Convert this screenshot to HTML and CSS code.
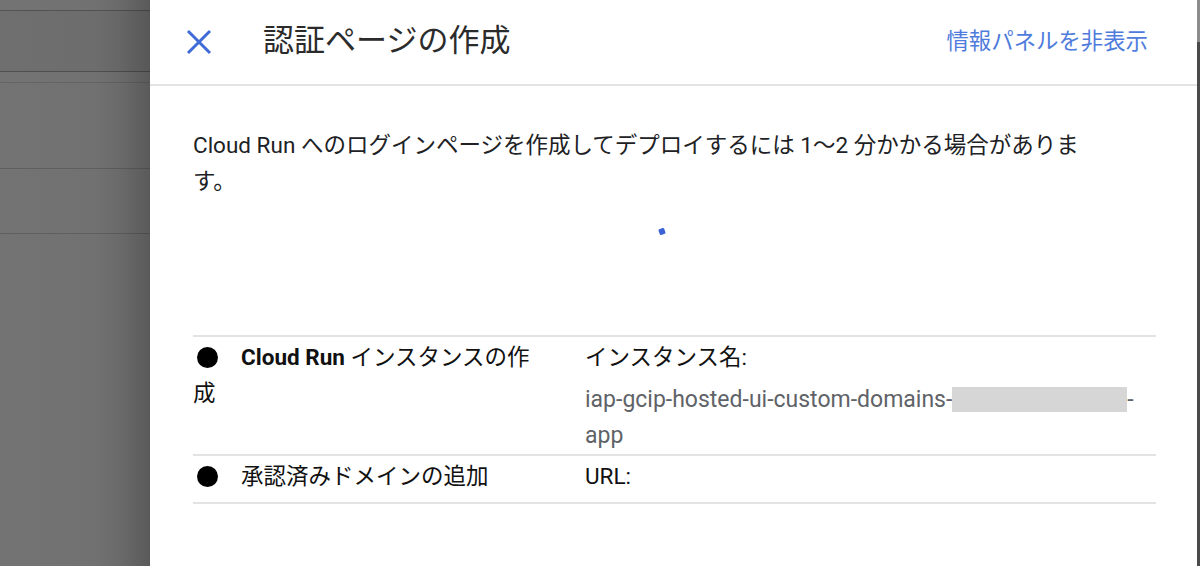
FILE: index.html
```html
<!DOCTYPE html>
<html lang="ja">
<head>
<meta charset="utf-8">
<title>認証ページの作成</title>
<link rel="stylesheet" href="styles.css">
</head>
<body>
<div class="screen">
  <div class="backdrop">
    <div class="bd-row bd-top"></div>
    <div class="bd-row bd-bar"></div>
    <div class="bd-row bd-thin"></div>
    <div class="bd-row bd-a"></div>
    <div class="bd-row bd-b"></div>
    <div class="bd-row bd-rest"></div>
  </div>
  <div class="panel">
    <header class="panel-header">
      <button class="close-btn" aria-label="閉じる">
        <svg width="26" height="26" viewBox="0 0 26 26"><path d="M2 2 L24 24 M24 2 L2 24" stroke="#3f6ad8" stroke-width="3" fill="none"/></svg>
      </button>
      <h1 class="title">認証ページの作成</h1>
      <a class="hide-link" href="#">情報パネルを非表示</a>
    </header>
    <div class="panel-body">
      <p class="intro">Cloud Run へのログインページを作成してデプロイするには 1〜2 分かかる場合があります。</p>
      <div class="spinner-wrap">
        <svg class="spinner" width="40" height="40" viewBox="0 0 40 40"><rect x="4" y="3.5" width="6" height="6" rx="1.2" fill="#3b62d6" transform="rotate(-20 7 6.5)"/></svg>
      </div>
      <div class="steps">
        <div class="step">
          <div class="step-name"><span class="dot"></span><b>Cloud Run</b> インスタンスの作成</div>
          <div class="step-detail">
            <div class="label">インスタンス名:</div>
            <div class="value">iap-gcip-hosted-ui-custom-domains-<span class="redacted"></span>-app</div>
          </div>
        </div>
        <div class="step">
          <div class="step-name"><span class="dot"></span>承認済みドメインの追加</div>
          <div class="step-detail">
            <div class="label">URL:</div>
          </div>
        </div>
      </div>
    </div>
  </div>
  <div class="edge"></div>
</div>
</body>
</html>
```

FILE: styles.css
```css
html, body {
  margin: 0;
  padding: 0;
}
body {
  font-family: Roboto, "Noto Sans CJK JP", sans-serif;
  color: #202124;
  background: #fff;
}
.screen {
  display: flex;
  width: 1200px;
  height: 566px;
  overflow: hidden;
}
.backdrop {
  width: 150px;
  flex: none;
  display: flex;
  flex-direction: column;
  background: linear-gradient(to right, #737373 0, #717171 95px, #6a6a6a 120px, #5a5a5a 150px);
}
.bd-row {
  border-bottom: 1px solid rgba(0, 0, 0, 0.28);
}
.bd-top { height: 10px; }
.bd-bar { height: 60px; background: rgba(0,0,0,0.03); }
.bd-thin { height: 10px; border-bottom-color: rgba(0,0,0,0.12); }
.bd-a { height: 85px; border-bottom-color: rgba(0,0,0,0.16); }
.bd-b { height: 64px; border-bottom-color: rgba(0,0,0,0.16); }
.bd-rest { flex: 1; border-bottom: none; }

.panel {
  flex: 1;
  display: flex;
  flex-direction: column;
  background: #fff;
}
.edge {
  width: 3px;
  flex: none;
  background: linear-gradient(#8c8c8c 0, #8c8c8c 42px, #4a4a4a 42px);
}

.panel-header {
  height: 86px;
  box-sizing: border-box;
  display: flex;
  align-items: center;
  padding: 0 49px 2px 36px;
  border-bottom: 2px solid #e3e3e3;
}
.close-btn {
  border: none;
  background: none;
  padding: 0;
  margin: 1px 0 0;
  width: 26px;
  height: 26px;
  display: flex;
  cursor: pointer;
}
.title {
  margin: 0 0 0 51px;
  font-size: 31px;
  line-height: 40px;
  font-weight: 400;
  color: #2b2b2b;
  flex: 1;
}
.hide-link {
  font-size: 22.4px;
  line-height: 32px;
  color: #4f7cdc;
  text-decoration: none;
}

.panel-body {
  padding: 0 41px 0 43px;
}
.intro {
  margin: 41px 0 0;
  width: 900px;
  font-size: 22.5px;
  line-height: 36px;
}
.spinner-wrap {
  height: 136px;
  display: flex;
  justify-content: center;
  padding-top: 26px;
  box-sizing: border-box;
}
.steps {
  border-top: 2px solid #e3e3e3;
  font-size: 22.5px;
}
.step {
  display: flex;
  box-sizing: border-box;
  min-height: 48px;
  padding: 2px 0 0;
  border-bottom: 2px solid #e3e3e3;
}
.step-name {
  width: 352px;
  padding-right: 40px;
  line-height: 36px;
  color: #111;
}
.step-name b {
  font-weight: 700;
}
.dot {
  display: inline-block;
  width: 21px;
  height: 21px;
  border-radius: 50%;
  background: #000;
  margin: 0 23px 0 4px;
  vertical-align: -3px;
}
.step-detail {
  flex: 1;
}
.label {
  line-height: 36px;
  color: #111;
}
.value {
  margin-top: 7px;
  font-size: 23px;
  line-height: 36px;
  color: #5f6368;
}
.redacted {
  display: inline-block;
  width: 175px;
  height: 25px;
  background: #d6d6d6;
  vertical-align: -5px;
}
```
